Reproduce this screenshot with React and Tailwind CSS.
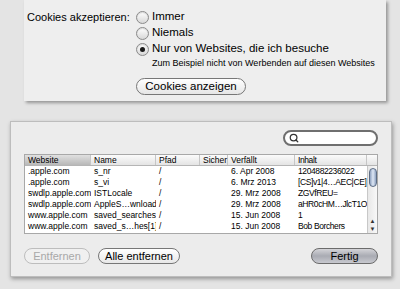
import { Search } from "lucide-react";

const font = { fontFamily: '"Liberation Sans", Arial, sans-serif' };

const rows = [
  [".apple.com", "s_nr", "/", "", "6. Apr 2008", "1204882236022"],
  [".apple.com", "s_vi", "/", "", "6. Mrz 2013", "[CS]v1|4…AEC|CE]"],
  ["swdlp.apple.com", "ISTLocale", "/", "", "29. Mrz 2008", "ZGVfREU="],
  ["swdlp.apple.com", "AppleS…wnload", "/", "", "29. Mrz 2008", "aHR0cHM…JlcT1O"],
  ["www.apple.com", "saved_searches", "/", "", "15. Jun 2008", "1"],
  ["www.apple.com", "saved_s…hes[1]", "/", "", "15. Jun 2008", "Bob Borchers"],
  ["www.apple.com", "saved_s…hes[2]", "/", "", "15. Jun 2008", "1204882…14820"],
];

const cols = ["w-[66px]", "w-[65px]", "w-[44px]", "w-[28px]", "w-[67px]", "w-[72px] tracking-[-0.4px]"];
const heads = ["Website", "Name", "Pfad", "Sicher", "Verfällt", "Inhalt"];

const Radio = ({ checked, label }) => (
  <div className="flex items-center h-[16px]">
    <span className="w-[13px] h-[13px] rounded-full border border-[#8a8a8a] bg-gradient-to-b from-[#ffffff] to-[#d8d8d8] flex items-center justify-center shadow-[inset_0_1px_1px_rgba(0,0,0,0.15)]">
      {checked && <span className="w-[5px] h-[5px] rounded-full bg-[#1a1a1a]" />}
    </span>
    <span className="ml-[3px] text-[11.5px] text-black leading-none whitespace-nowrap">{label}</span>
  </div>
);

const Pill = ({ children, className, textClass }) => (
  <div className={"h-[16px] rounded-full flex items-center justify-center border text-[11px] leading-none " + className}>
    <span className={textClass}>{children}</span>
  </div>
);

export default function App() {
  return (
    <div className="w-[400px] h-[289px] bg-[#e4e4e4] overflow-hidden" style={font}>
      {/* Cookie prefs */}
      <div className="ml-[24px] w-[362px] h-[101px] bg-[#eeeeee] shadow-[2px_2px_3px_rgba(0,0,0,0.35)] flex pt-[9px] pl-[3px]">
        <div className="w-[109px] text-[11px] leading-none h-[16px] flex items-center text-black whitespace-nowrap">Cookies akzeptieren:</div>
        <div className="flex flex-col">
          <Radio label="Immer" />
          <Radio label="Niemals" />
          <Radio checked label="Nur von Websites, die ich besuche" />
          <div className="ml-[16px] text-[9px] leading-none mt-[2px] text-black whitespace-nowrap">Zum Beispiel nicht von Werbenden auf diesen Websites</div>
          <div className="mt-[10px] w-[110px] h-[17px] rounded-full border border-[#777] bg-gradient-to-b from-[#ffffff] to-[#e6e6e6] flex items-center justify-center text-[11.5px] leading-none text-black">
            Cookies anzeigen
          </div>
        </div>
      </div>

      {/* Cookie sheet */}
      <div className="mt-[20px] ml-[10px] w-[382px] h-[156px] bg-[#ececec] border border-[#bdbdbd] shadow-[1px_2px_4px_rgba(0,0,0,0.35)] px-[13px] pt-[8px] flex flex-col">
        <div className="flex justify-end">
          <div className="w-[95px] h-[16px] rounded-full border-2 border-[#6f6f6f] bg-white flex items-center pl-[4px]">
            <Search size={10} strokeWidth={3} className="text-[#333]" />
          </div>
        </div>
        <div className="mt-[8px] h-[80px] bg-white border border-[#a8a8a8] flex flex-col overflow-hidden">
          <div className="flex h-[11px] text-[8.5px] leading-none border-b border-[#b5b5b5] bg-gradient-to-b from-[#fbfbfb] to-[#e4e4e4]">
            {heads.map((h, i) => (
              <div
                key={h}
                className={
                  cols[i] +
                  " pl-[3px] flex items-center border-r border-[#c6c6c6] whitespace-nowrap " +
                  (i === 0 ? "bg-gradient-to-b from-[#e0e0e0] to-[#b8b8b8]" : "")
                }
              >
                {h}
              </div>
            ))}
            <div className="flex-1" />
          </div>
          <div className="flex flex-1 overflow-hidden">
            <div className="flex flex-col">
              {rows.map((r, ri) => (
                <div key={ri} className="flex shrink-0 h-[11px] text-[8.5px] leading-none text-black">
                  {r.map((c, ci) => (
                    <div key={ci} className={cols[ci] + " pl-[3px] flex items-center whitespace-nowrap overflow-hidden"}>
                      {c}
                    </div>
                  ))}
                </div>
              ))}
            </div>
            <div className="flex-1 border-l border-[#c8c8c8] bg-gradient-to-r from-[#e8e8e8] to-[#f8f8f8] flex flex-col items-center pt-[2px]">
              <div className="w-[8px] h-[19px] rounded-full border border-[#5d6d85] bg-gradient-to-r from-[#8fa2c0] via-[#dfe8f5] to-[#8fa2c0]" />
              <div className="flex-1" />
              <div className="text-[6px] leading-none text-[#333] mb-[2px]">▲</div>
              <div className="text-[6px] leading-none text-[#333] mb-[1px]">▼</div>
            </div>
          </div>
        </div>
        <div className="mt-[14px] flex items-center">
          <Pill className="w-[66px] border-[#bdbdbd] bg-[#f0f0f0]" textClass="text-[#a8a8a8]">Entfernen</Pill>
          <Pill className="ml-[8px] w-[82px] border-[#777] bg-gradient-to-b from-white to-[#e8e8e8]" textClass="text-black">Alle entfernen</Pill>
          <div className="flex-1" />
          <Pill className="w-[67px] border-[#6b6b6b] bg-gradient-to-b from-[#d4d4d8] via-[#a9abb3] to-[#c8c9cf]" textClass="text-black">Fertig</Pill>
        </div>
      </div>
    </div>
  );
}
